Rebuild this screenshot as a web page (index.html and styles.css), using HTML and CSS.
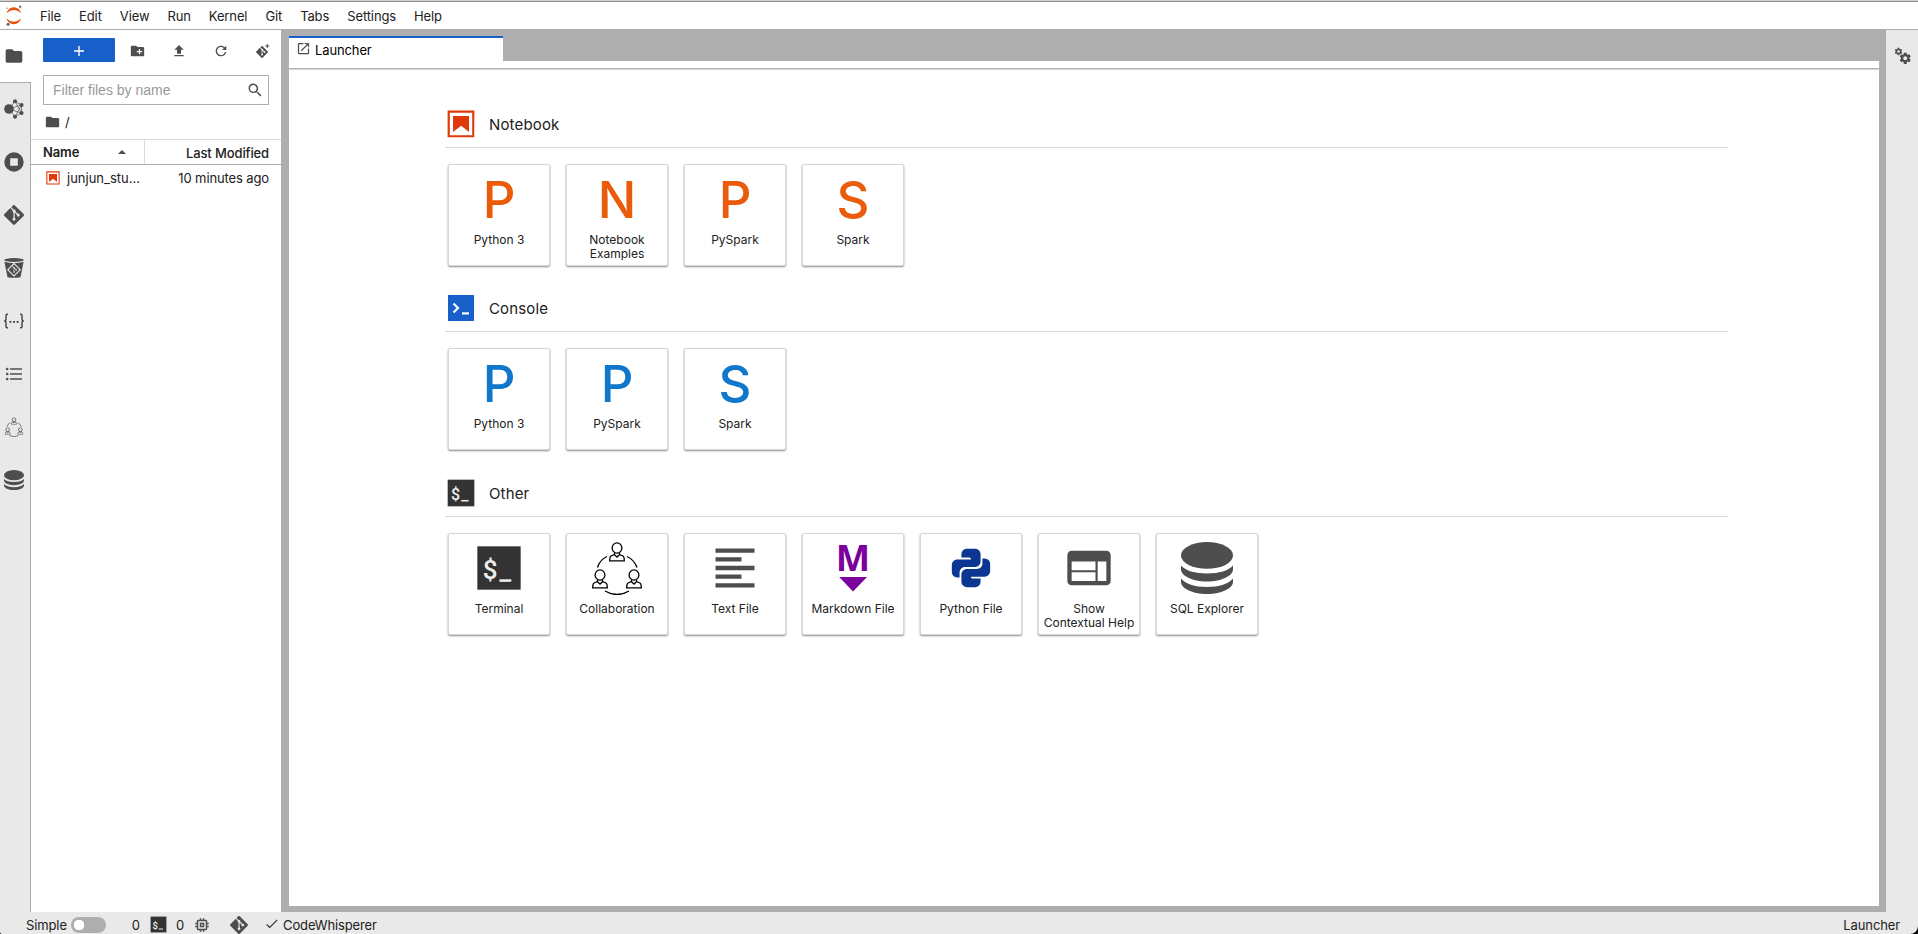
FILE: index.html
```
<!DOCTYPE html>
<html lang="en">

<head>
    <meta charset="utf-8">
    <title>JupyterLab</title>
    <link rel="stylesheet" href="styles.css">
</head>

<body>
    <!-- shared icons -->
    <svg class="icon-defs">
        <symbol id="i-folder" viewBox="0 0 24 24">
            <path d="M10 4H4c-1.1 0-1.99.9-1.99 2L2 18c0 1.1.9 2 2 2h16c1.1 0 2-.9 2-2V8c0-1.1-.9-2-2-2h-8l-2-2z"/>
        </symbol>
        <symbol id="i-git" viewBox="0 0 24 24">
            <path d="M23.546 10.93L13.067.452c-.604-.603-1.582-.603-2.188 0L8.708 2.627l2.76 2.76c.645-.215 1.379-.07 1.889.441.516.515.658 1.258.438 1.9l2.658 2.66c.645-.223 1.387-.078 1.9.435.721.72.721 1.884 0 2.604-.719.719-1.881.719-2.6 0-.539-.541-.674-1.337-.404-1.996L12.86 8.955v6.525c.176.086.342.203.488.348.713.721.713 1.883 0 2.6-.719.721-1.889.721-2.609 0-.719-.719-.719-1.879 0-2.598.182-.18.387-.316.605-.406V8.835c-.217-.091-.424-.222-.6-.401-.545-.545-.676-1.342-.396-2.009L7.636 3.7.45 10.881c-.6.605-.6 1.584 0 2.189l10.48 10.477c.604.604 1.582.604 2.186 0l10.43-10.43c.605-.603.605-1.582 0-2.187"/>
        </symbol>
        <symbol id="i-notebook" viewBox="0 0 22 22">
            <path d="M18.7 3.3v15.4H3.3V3.3h15.4m1.5-1.5H1.8v18.3h18.3l.1-18.3z"/>
            <path d="M16.5 16.5l-5.4-4.3-5.6 4.3v-11h11z"/>
        </symbol>
        <symbol id="i-database" viewBox="0 0 52 52">
            <ellipse cx="26" cy="13.4" rx="26" ry="13.4"/>
            <path d="M0 23.5c4 5 14 8 26 8s22-3 26-8v4c0 6-11 12-26 12S0 33.5 0 27.5z"/>
            <path d="M0 36.5c4 5 14 8.500 26 8.500s22-3.500 26-8.500v3.500c0 6-11 12-26 12S0 46 0 40z"/>
        </symbol>
        <symbol id="i-person" viewBox="0 0 16 20">
            <g fill="none" stroke="currentColor" stroke-width="1.3">
                <ellipse cx="8" cy="6" rx="4.9" ry="5.2"/>
                <path d="M5.5 11v1.5L2 14c-1 .6-1.3 1.5-1.3 4.8h14.6c0-3.3-.3-4.2-1.3-4.8l-3.5-1.5V11M5.5 12.7L8 15l2.5-2.3"/>
            </g>
        </symbol>
        <symbol id="i-collab" viewBox="0 0 52 54">
            <use href="#i-person" x="18" y="1" width="16" height="20"/>
            <use href="#i-person" x="1" y="28" width="16" height="20"/>
            <use href="#i-person" x="35" y="28" width="16" height="20"/>
            <path d="M16 15.5Q9 18.5 6.5 26.5M36 15.5q7 3 10 11M14 50q12 7 24 0" fill="none" stroke="currentColor" stroke-width="1.3"/>
        </symbol>
        <symbol id="i-gear" viewBox="0 0 24 24">
            <path d="M19.43 12.98c.04-.32.07-.64.07-.98s-.03-.66-.07-.98l2.11-1.65c.19-.15.24-.42.12-.64l-2-3.46c-.12-.22-.39-.3-.61-.22l-2.49 1c-.52-.4-1.08-.73-1.69-.98l-.38-2.65C14.46 2.18 14.25 2 14 2h-4c-.25 0-.46.18-.49.42l-.38 2.65c-.61.25-1.17.59-1.69.98l-2.49-1c-.23-.09-.49 0-.61.22l-2 3.46c-.13.22-.07.49.12.64l2.11 1.65c-.04.32-.07.65-.07.98s.03.66.07.98l-2.11 1.65c-.19.15-.24.42-.12.64l2 3.46c.12.22.39.3.61.22l2.49-1c.52.4 1.08.73 1.69.98l.38 2.65c.03.24.24.42.49.42h4c.25 0 .46-.18.49-.42l.38-2.65c.61-.25 1.17-.59 1.69-.98l2.49 1c.23.09.49 0 .61-.22l2-3.46c.12-.22.07-.49-.12-.64l-2.11-1.65zM12 15.5c-1.93 0-3.5-1.57-3.5-3.5s1.57-3.5 3.5-3.5 3.5 1.57 3.5 3.5-1.57 3.5-3.5 3.5z"/>
        </symbol>
    </svg>

    <div class="app">
        <header class="menu-bar">
            <svg class="logo" viewBox="0 0 18 22">
                <g fill="#e8500e">
                    <path d="M1.3 8.3Q9 1.5 16.2 8.3Q14 2.2 8.8 2.2T1.3 8.3z"/>
                    <path d="M1.3 13.5Q9 20 16.2 13.5Q14 19.2 8.8 19.2T1.3 13.5z"/>
                </g>
                <circle cx="15.2" cy="1.7" r="1.2" fill="#767677"/>
                <circle cx="2" cy="3.2" r=".7" fill="#767677"/>
                <circle cx="3.1" cy="19.3" r="1.5" fill="#616262"/>
            </svg>
            <nav class="menu">
                <span>File</span>
                <span>Edit</span>
                <span>View</span>
                <span>Run</span>
                <span>Kernel</span>
                <span>Git</span>
                <span>Tabs</span>
                <span>Settings</span>
                <span>Help</span>
            </nav>
        </header>

        <div class="workspace">
            <aside class="side-bar">
                <div class="side-tab active"><svg width="20" height="20"><use href="#i-folder"/></svg></div>
                <div class="side-tab">
                    <svg width="20" height="20" viewBox="0 0 20 20">
                        <path d="M5 10L11 2.3 17.5 6v8L11 17.7zM5 10l12.5-4M5 10l12.5 4M11 2.3l6.5 11.7M11 17.7L17.5 6" fill="none" stroke="#616161" stroke-width=".8"/>
                        <circle cx="5" cy="10" r="4.8"/>
                        <circle cx="11" cy="2.3" r="2"/>
                        <circle cx="17.5" cy="6" r="2.1"/>
                        <circle cx="17.5" cy="14" r="2.1"/>
                        <circle cx="11" cy="17.7" r="2"/>
                    </svg>
                </div>
                <div class="side-tab">
                    <svg width="20" height="20" viewBox="0 0 20 20">
                        <path fill-rule="evenodd" d="M10 .3a9.7 9.7 0 100 19.4A9.7 9.7 0 0010 .3zM6.2 6.2h7.6v7.6H6.2z"/>
                    </svg>
                </div>
                <div class="side-tab"><svg width="20" height="20"><use href="#i-git"/></svg></div>
                <div class="side-tab">
                    <svg width="20" height="20" viewBox="0 0 20 20">
                        <ellipse cx="10" cy="2" rx="9.8" ry="1.9"/>
                        <path d="M.4 3.8Q10 6.6 19.6 3.8L16.5 19.3Q10 20.4 3.5 19.3z"/>
                        <path d="M10 4.8l7 7-7 7-7-7z" fill="#e9e9e9"/>
                        <use href="#i-git" x="4.8" y="6.6" width="10.4" height="10.4"/>
                    </svg>
                </div>
                <div class="side-tab">
                    <svg width="20" height="20" viewBox="0 0 20 20">
                        <path d="M4 3.2H3.3Q2 3.2 2 4.6v3.6Q2 9.8.4 10 2 10.2 2 11.8v3.6q0 1.4 1.3 1.4H4M16 3.2h.7q1.3 0 1.3 1.4v3.6q0 1.6 1.6 1.8-1.6.2-1.6 1.8v3.6q0 1.4-1.3 1.4H16" fill="none" stroke="#333" stroke-width="1.3"/>
                        <path d="M5.5 10h1.8v1.8H5.500zM9.1 10h1.8v1.8H9.1zM12.7 10h1.8v1.8h-1.8z" fill="#333"/>
                    </svg>
                </div>
                <div class="side-tab">
                    <svg width="20" height="20" viewBox="0 0 20 20">
                        <path d="M6 4.3h12v1.5H6zM6 9.3h12v1.5H6zM6 14.3h12v1.5H6z"/>
                        <circle cx="3.2" cy="5" r="1.3"/>
                        <circle cx="3.2" cy="10" r="1.3"/>
                        <circle cx="3.2" cy="15" r="1.3"/>
                    </svg>
                </div>
                <div class="side-tab"><svg class="black" width="20" height="20"><use href="#i-collab"/></svg></div>
                <div class="side-tab"><svg width="20" height="20"><use href="#i-database"/></svg></div>
            </aside>

            <section class="file-browser">
                <div class="fb-toolbar">
                    <button class="new-launcher">
                        <svg width="10" height="10" viewBox="0 0 10 10"><path d="M4.3 0h1.4v4.3H10v1.4H5.7V10H4.3V5.7H0V4.3h4.3z" fill="#fff"/></svg>
                    </button>
                    <div class="tool">
                        <svg width="17" height="16" viewBox="0 0 24 24"><path d="M20 6h-8l-2-2H4c-1.11 0-1.99.89-1.99 2L2 18c0 1.11.89 2 2 2h16c1.11 0 2-.89 2-2V8c0-1.11-.89-2-2-2zm-1 8h-3v3h-2v-3h-3v-2h3V9h2v3h3v2z"/></svg>
                    </div>
                    <div class="tool">
                        <svg width="16" height="16" viewBox="0 0 24 24"><path d="M9 16h6v-6h4l-7-7-7 7h4zm-4 2h14v2H5z"/></svg>
                    </div>
                    <div class="tool">
                        <svg width="16" height="16" viewBox="0 0 18 18"><path d="M9 13.5c-2.49 0-4.5-2.01-4.5-4.5S6.51 4.5 9 4.5c1.24 0 2.36.52 3.17 1.33L10 8h5V3l-1.76 1.76C12.15 3.68 10.66 3 9 3 5.69 3 3.01 5.69 3.01 9S5.69 15 9 15c2.97 0 5.43-2.16 5.9-5h-1.52c-.46 2-2.24 3.5-4.38 3.5z"/></svg>
                    </div>
                    <div class="tool">
                        <svg width="14" height="14" viewBox="0 0 14 14">
                            <use href="#i-git" x="0" y="2" width="12" height="12"/>
                            <path d="M10.8 0h1v1.5h1.5v1h-1.5V4h-1V2.5H9.3v-1h1.5z"/>
                        </svg>
                    </div>
                </div>

                <div class="filter">
                    <input type="text" placeholder="Filter files by name">
                    <svg width="16" height="16" viewBox="0 0 18 18"><path d="M12.1 10.9h-.7l-.2-.2c.8-.9 1.3-2.2 1.3-3.5 0-3-2.4-5.4-5.4-5.4S1.8 4.2 1.8 7.1s2.4 5.4 5.4 5.4c1.3 0 2.5-.5 3.5-1.3l.2.2v.7l4.1 4.1 1.2-1.2-4.1-4.1zm-5 0c-2.1 0-3.7-1.7-3.7-3.7s1.7-3.7 3.7-3.7 3.7 1.7 3.7 3.7-1.6 3.7-3.7 3.7z"/></svg>
                </div>

                <div class="crumbs">
                    <svg width="17" height="16"><use href="#i-folder"/></svg>
                    <span>/</span>
                </div>

                <div class="list-header">
                    <div class="col-name">Name
                        <svg width="8" height="4" viewBox="0 0 8 4"><path d="M0 4l4-4 4 4z"/></svg>
                    </div>
                    <div class="col-modified">Last Modified</div>
                </div>
                <div class="list-row">
                    <svg class="nb" width="16" height="16"><use href="#i-notebook"/></svg>
                    <span class="file-name">junjun_stu...</span>
                    <span class="file-date">10 minutes ago</span>
                </div>
            </section>

            <main class="dock">
                <div class="tab-bar">
                    <div class="tab">
                        <svg width="15" height="15" viewBox="0 0 24 24"><path d="M19 19H5V5h7V3H5a2 2 0 00-2 2v14a2 2 0 002 2h14c1.1 0 2-.9 2-2v-7h-2v7zM14 3v2h3.59l-9.83 9.83 1.41 1.41L19 6.41V10h2V3h-7z"/></svg>
                        <span>Launcher</span>
                    </div>
                </div>
                <div class="panel-toolbar"></div>
                <div class="launcher">
                    <section class="launcher-section">
                        <div class="section-header">
                            <svg class="nb" width="32" height="32"><use href="#i-notebook"/></svg>
                            <h2>Notebook</h2>
                        </div>
                        <div class="cards notebook">
                            <div class="card"><div class="card-icon">P</div><div class="card-label">Python 3</div></div>
                            <div class="card"><div class="card-icon">N</div><div class="card-label">Notebook Examples</div></div>
                            <div class="card"><div class="card-icon">P</div><div class="card-label">PySpark</div></div>
                            <div class="card"><div class="card-icon">S</div><div class="card-label">Spark</div></div>
                        </div>
                    </section>

                    <section class="launcher-section">
                        <div class="section-header">
                            <svg width="32" height="32" viewBox="0 0 32 32">
                                <rect x="3" y="3" width="26" height="26" fill="#195fc9"/>
                                <path d="M8.5 11.5l4.5 4.5-4.5 4.5" fill="none" stroke="#fff" stroke-width="2.2"/>
                                <path d="M17 20.3h7v2.2h-7z" fill="#fff"/>
                            </svg>
                            <h2>Console</h2>
                        </div>
                        <div class="cards console">
                            <div class="card"><div class="card-icon">P</div><div class="card-label">Python 3</div></div>
                            <div class="card"><div class="card-icon">P</div><div class="card-label">PySpark</div></div>
                            <div class="card"><div class="card-icon">S</div><div class="card-label">Spark</div></div>
                        </div>
                    </section>

                    <section class="launcher-section">
                        <div class="section-header">
                            <svg width="32" height="32" viewBox="0 0 24 24">
                                <rect x="2" y="2" width="20" height="20" fill="#333"/>
                                <text x="4.5" y="17.2" class="prompt">$</text>
                                <path d="M12.2 17.2h5.5v1.2h-5.5z" fill="#eee"/>
                            </svg>
                            <h2>Other</h2>
                        </div>
                        <div class="cards">
                            <div class="card">
                                <div class="card-icon">
                                    <svg width="52" height="52" viewBox="0 0 24 24">
                                        <rect x="2" y="2" width="20" height="20" fill="#333"/>
                                        <text x="4.5" y="17.2" class="prompt">$</text>
                                        <path d="M12.2 17.2h5.5v1.2h-5.5z" fill="#eee"/>
                                    </svg>
                                </div>
                                <div class="card-label">Terminal</div>
                            </div>
                            <div class="card">
                                <div class="card-icon"><svg class="black" width="52" height="54"><use href="#i-collab"/></svg></div>
                                <div class="card-label">Collaboration</div>
                            </div>
                            <div class="card">
                                <div class="card-icon"><svg width="52" height="52" viewBox="0 0 24 24"><path d="M15 15H3v2h12v-2zm0-8H3v2h12V7zM3 13h18v-2H3v2zm0 8h18v-2H3v2zM3 3v2h18V3H3z"/></svg></div>
                                <div class="card-label">Text File</div>
                            </div>
                            <div class="card">
                                <div class="card-icon">
                                    <svg class="markdown" width="52" height="52" viewBox="0 0 52 52">
                                        <text x="26" y="29" class="md-letter">M</text>
                                        <path d="M12.2 35h27.8L26 49.500z"/>
                                    </svg>
                                </div>
                                <div class="card-label">Markdown File</div>
                            </div>
                            <div class="card">
                                <div class="card-icon">
                                    <svg class="python" width="46" height="48" viewBox="0 0 24 25"><path d="M19.14 7.5A2.86 2.86 0 0122 10.36v3.78A2.86 2.86 0 0119.14 17H12c0 .39.32.96.71.96H17v1.68a2.86 2.86 0 01-2.86 2.86H9.86A2.86 2.86 0 017 19.64v-3.75c0-1.58 1.28-2.85 2.86-2.85h5.25c1.58 0 2.85-1.28 2.85-2.86V7.5h1.18M4.86 17.5C3.28 17.5 2 16.22 2 14.64v-3.78C2 9.28 3.28 8 4.86 8H12c0-.39-.32-.96-.71-.96H7V5.36C7 3.78 8.28 2.5 9.86 2.5h4.28C15.72 2.5 17 3.78 17 5.36v3.75c0 1.58-1.28 2.85-2.86 2.85H8.89c-1.58 0-2.85 1.28-2.85 2.86v2.68H4.86"/></svg>
                                </div>
                                <div class="card-label">Python File</div>
                            </div>
                            <div class="card">
                                <div class="card-icon"><svg width="52" height="52" viewBox="0 0 24 24"><path d="M20 4H4c-1.1 0-1.99.9-1.99 2L2 18c0 1.1.9 2 2 2h16c1.1 0 2-.9 2-2V6c0-1.1-.9-2-2-2zm-5 14H4v-4h11v4zm0-5H4V9h11v4zm5 5h-4V9h4v9z"/></svg></div>
                                <div class="card-label">Show Contextual Help</div>
                            </div>
                            <div class="card">
                                <div class="card-icon"><svg width="52" height="52"><use href="#i-database"/></svg></div>
                                <div class="card-label">SQL Explorer</div>
                            </div>
                        </div>
                    </section>
                </div>
            </main>

            <aside class="right-bar">
                <svg width="18" height="18" viewBox="0 0 18 18">
                    <use href="#i-gear" x="0" y="0" width="9" height="9"/>
                    <use href="#i-gear" x="4.5" y="4.5" width="13.5" height="13.5"/>
                </svg>
            </aside>
        </div>

        <footer class="status-bar">
            <span>Simple</span>
            <div class="switch"></div>
            <span class="count">0</span>
            <svg class="st-terminal" width="19" height="19" viewBox="0 0 24 24">
                <rect x="2" y="2" width="20" height="20" fill="#333"/>
                <text x="4.5" y="17.2" class="prompt">$</text>
                <path d="M12.2 17.2h5.5v1.2h-5.5z" fill="#eee"/>
            </svg>
            <span>0</span>
            <svg class="st-kernel" width="18" height="18" viewBox="0 0 24 24"><path d="M15 9H9v6h6V9zm-2 4h-2v-2h2v2zm8-2V9h-2V7c0-1.1-.9-2-2-2h-2V3h-2v2h-2V3H9v2H7c-1.1 0-2 .9-2 2v2H3v2h2v2H3v2h2v2c0 1.1.9 2 2 2h2v2h2v-2h2v2h2v-2h2c1.1 0 2-.9 2-2v-2h2v-2h-2v-2h2zm-4 6H7V7h10v10z"/></svg>
            <svg class="st-git" width="18" height="18"><use href="#i-git"/></svg>
            <svg class="st-check" width="12" height="10" viewBox="0 0 12 10"><path d="M.7 5.5l3 3L11.3.8" fill="none" stroke="#333" stroke-width="1.2"/></svg>
            <span>CodeWhisperer</span>
            <span class="current">Launcher</span>
        </footer>
    </div>
</body>

</html>
```
FILE: styles.css
```
html {
    background-color: #000;
}

body {
    margin: 0;
    font-family: Inter, "Liberation Sans", sans-serif;
    font-size: 13px;
    letter-spacing: -0.12px;
    color: #212121;
}

svg {
    display: block;
    flex-shrink: 0;
    overflow: visible;
    fill: #4e4e4e;
    color: #4e4e4e;
}

.icon-defs {
    position: absolute;
    width: 0;
    height: 0;
}

.nb {
    fill: #e0390b;
}

.black {
    color: #000;
}

.markdown {
    fill: #7b009c;
}

.python {
    fill: #0d3592;
}

.prompt {
    font: 500 12px Roboto, sans-serif;
    fill: #eee;
}

.md-letter {
    font: bold 36.5px "Open Sans", sans-serif;
    letter-spacing: 0;
    text-anchor: middle;
}

.app {
    display: flex;
    flex-direction: column;
    height: 934px;
    box-sizing: border-box;
    overflow: hidden;
    background-color: #e9e9e9;
    border-top: 1px solid #d0d0d0;
    border-radius: 0 0 8px 2px;
}

/* menu */
.menu-bar {
    display: flex;
    align-items: center;
    height: 27px;
    background-color: #fff;
    border-top: 1px solid #8e8e8e;
    border-bottom: 1px solid #aeaeae;
}

.logo {
    width: 18px;
    height: 22px;
    margin-left: 5px;
}

.menu {
    display: flex;
    gap: 18px;
    margin-left: 17px;
}

.workspace {
    display: flex;
    height: 882px;
}

/* left side bar */
.side-bar {
    display: flex;
    flex-direction: column;
    width: 31px;
    background-color: #e9e9e9;
}

.side-tab {
    display: flex;
    align-items: center;
    height: 53px;
    padding: 0 0 1px 4px;
    box-sizing: border-box;
    border-right: 1px solid #aeaeae;
}

.side-tab.active {
    padding-bottom: 0;
    background-color: #fff;
    border-right: none;
    border-bottom: 1px solid #aeaeae;
}

.side-tab:last-child {
    flex: 1;
    align-items: flex-start;
    padding-top: 16px;
}

/* file browser */
.file-browser {
    width: 250px;
    background-color: #fff;
}

.fb-toolbar {
    display: flex;
    align-items: center;
    height: 24px;
    padding: 8px 0 0 12px;
}

.new-launcher {
    display: flex;
    flex-shrink: 0;
    align-items: center;
    justify-content: center;
    width: 72px;
    height: 24px;
    padding: 2px 0 0;
    border: none;
    border-radius: 1px;
    background-color: #195fc9;
}

.tool {
    display: flex;
    flex-shrink: 0;
    justify-content: center;
    width: 42px;
    padding-top: 2px;
}

.tool:nth-child(2) {
    margin-left: 1px;
}

.filter {
    display: flex;
    align-items: center;
    height: 30px;
    margin: 13px 12px 0;
    padding: 0 5px 0 9px;
    box-sizing: border-box;
    border: 1px solid #aeaeae;
}

.filter input {
    flex: 1;
    min-width: 0;
    padding: 0;
    border: none;
    outline: none;
    font: 14px "Liberation Sans", Arial, sans-serif;
}

.filter input::placeholder {
    color: #999;
}

.filter svg {
    margin-bottom: 1px;
}

.crumbs {
    display: flex;
    align-items: center;
    gap: 4px;
    height: 34px;
    padding-left: 13px;
}

.list-header {
    display: flex;
    height: 24px;
    border-top: 1px solid #dcdcdc;
    border-bottom: 1px solid #aeaeae;
    line-height: 26px;
}

.col-name {
    display: flex;
    align-items: center;
    justify-content: space-between;
    width: 83px;
    padding: 0 18px 0 12px;
    border-right: 1px solid #dcdcdc;
    font-weight: 600;
}

.col-modified {
    flex: 1;
    padding-right: 12px;
    text-align: right;
    font-weight: 500;
}

.list-row {
    display: flex;
    align-items: center;
    height: 25px;
    padding: 0 12px 0 14px;
}

.file-name {
    flex: 1;
    margin-left: 6px;
    letter-spacing: 0;
}

/* main area */
.dock {
    display: flex;
    flex-direction: column;
    width: 1590px;
    padding: 6px 7px 6px 8px;
    background-color: #aeaeae;
}

.tab-bar {
    height: 25px;
}

.tab {
    display: flex;
    align-items: center;
    gap: 4px;
    width: 214px;
    height: 25px;
    padding-left: 7px;
    box-sizing: border-box;
    border-top: 2px solid #195fc9;
    background-color: #fff;
    color: #000;
}

.tab svg {
    margin-bottom: 3px;
}

.panel-toolbar {
    height: 7px;
    background-color: #fff;
    border-bottom: 1px solid #aeaeae;
    box-shadow: 0 1px 1px #ddd;
    z-index: 1;
}

.launcher {
    flex: 1;
    padding: 37px 151px 0 156px;
    background-color: #fff;
}

.launcher-section {
    height: 184px;
}

.launcher-section:nth-child(2) {
    height: 185px;
}

.section-header {
    display: flex;
    align-items: center;
    height: 41px;
    border-bottom: 1px solid #d8d8d8;
}

.section-header svg {
    margin-bottom: 5px;
}

.section-header h2 {
    margin: 0 0 5px 12px;
    font-size: 15px;
    font-weight: 400;
    letter-spacing: 0.15px;
}

.cards {
    display: flex;
    gap: 16px;
    padding: 16px 0 0 3px;
}

.card {
    width: 100px;
    height: 100px;
    border: 1px solid #d8d8d8;
    border-radius: 2px;
    background-color: #fff;
    box-shadow: 0 1px 2px rgba(0, 0, 0, .45);
}

.card-icon {
    display: flex;
    align-items: center;
    justify-content: center;
    height: 68px;
    font-size: 51px;
    font-weight: 500;
}

.notebook .card-icon {
    color: #ea5b0c;
}

.console .card-icon {
    color: #1177cb;
}

.card-label {
    padding: 0 4px;
    font-size: 12px;
    line-height: 14px;
    letter-spacing: 0;
    text-align: center;
}

.right-bar {
    width: 32px;
    padding: 17px 0 0 8px;
    box-sizing: border-box;
    background-color: #e9e9e9;
}

/* status bar */
.status-bar {
    display: flex;
    align-items: center;
    height: 22px;
    padding: 3px 18px 0 26px;
    box-sizing: border-box;
}

.switch {
    width: 35px;
    height: 16px;
    margin-left: 4px;
    border-radius: 8px;
    background: radial-gradient(circle at 8px 8px, #fff 5px, #aeaeae 5.5px);
}

.count {
    margin-left: 26px;
}

.st-terminal {
    margin: 0 8px 0 9px;
}

.st-kernel {
    margin-left: 9px;
}

.st-git {
    margin-left: 19px;
}

.st-check {
    margin: 0 5px 2px 18px;
}

.current {
    margin-left: auto;
}
```
